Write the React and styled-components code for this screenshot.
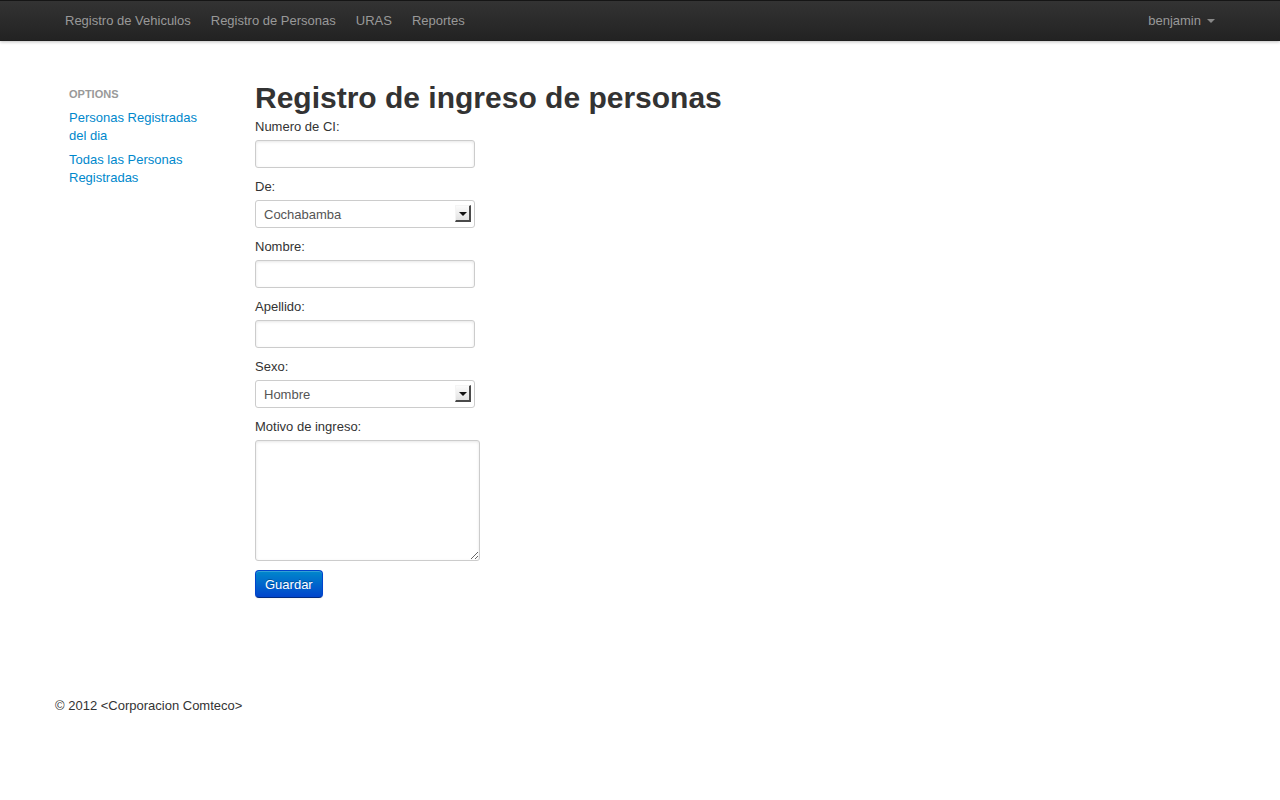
import React from 'react'
import styled, { createGlobalStyle } from 'styled-components';

const GlobalStyle = createGlobalStyle`
  body {
    margin: 0;
    background: #fff;
    font-family: "Liberation Sans", Arial, sans-serif;
    font-size: 13px;
    line-height: 18px;
    color: #333;
  }
`

export default function App() {
    const fields = [
        { label: "Numero de CI:", type: "input" },
        { label: "De:", type: "select", options: ["Cochabamba", "La Paz", "Santa Cruz", "Oruro", "Potosi", "Tarija", "Chuquisaca", "Beni", "Pando"] },
        { label: "Nombre:", type: "input" },
        { label: "Apellido:", type: "input" },
        { label: "Sexo:", type: "select", options: ["Hombre", "Mujer"] },
    ];

    return (
        <>
            <GlobalStyle />
            <Navbar>
                <Container>
                    <NavList>
                        <NavLink href="#">Registro de Vehiculos</NavLink>
                        <NavLink href="#">Registro de Personas</NavLink>
                        <NavLink href="#">URAS</NavLink>
                        <NavLink href="#">Reportes</NavLink>
                    </NavList>
                    <NavLink href="#">benjamin <Caret /></NavLink>
                </Container>
            </Navbar>

            <Page>
                <Row>
                    <Sidebar>
                        <NavHeader>Options</NavHeader>
                        <SideLink href="#">Personas Registradas del dia</SideLink>
                        <SideLink href="#">Todas las Personas Registradas</SideLink>
                    </Sidebar>
                    <Main>
                        <Title>Registro de ingreso de personas</Title>
                        <form onSubmit={(e) => e.preventDefault()}>
                            {fields.map((field, index) => (
                                <div key={index}>
                                    <Label>{field.label}</Label>
                                    {field.type === "input" ? (
                                        <TextInput type="text" />
                                    ) : (
                                        <SelectWrap>
                                            <Select defaultValue={field.options[0]}>
                                                {field.options.map((opt) => (
                                                    <option key={opt} value={opt}>{opt}</option>
                                                ))}
                                            </Select>
                                            <SelectArrow />
                                        </SelectWrap>
                                    )}
                                </div>
                            ))}
                            <Label>Motivo de ingreso:</Label>
                            <TextArea />
                            <Button type="submit">Guardar</Button>
                        </form>
                    </Main>
                </Row>
                <Footer>© 2012 &lt;Corporacion Comteco&gt;</Footer>
            </Page>
        </>
    )
}

const Navbar = styled.div`
    height: 40px;
    border-top: 1px solid #151515;
    background: linear-gradient(to bottom, #333333, #222222);
    box-shadow: 0 1px 3px rgba(0, 0, 0, 0.25), inset 0 -1px 0 rgba(0, 0, 0, 0.1);
`

const Container = styled.div`
    width: 1170px;
    margin: 0 auto;
    display: flex;
    justify-content: space-between;
    align-items: center;
    height: 40px;
`

const NavList = styled.div`
    display: flex;
`

const NavLink = styled.a`
    display: flex;
    align-items: center;
    padding: 10px 10px 11px;
    color: #999;
    text-decoration: none;
    font-size: 13px;
    line-height: 19px;
`

const Caret = styled.span`
    display: inline-block;
    margin-left: 6px;
    margin-top: 1px;
    border-top: 4px solid #888;
    border-left: 4px solid transparent;
    border-right: 4px solid transparent;
`

const Page = styled.div`
    width: 1170px;
    margin: 0 auto;
    padding-top: 37px;
`

const Row = styled.div`
    display: grid;
    grid-template-columns: 170px 1fr;
    column-gap: 30px;
`

const Sidebar = styled.div`
    display: flex;
    flex-direction: column;
    padding: 4px 14px 0;
`

const NavHeader = styled.div`
    padding: 3px 0;
    font-size: 11px;
    font-weight: bold;
    line-height: 18px;
    color: #999;
    text-transform: uppercase;
    text-shadow: 0 1px 0 rgba(255, 255, 255, 0.5);
`

const SideLink = styled.a`
    display: block;
    padding: 3px 0;
    margin-right: -2px;
    color: #0088cc;
    text-decoration: none;
    line-height: 18px;
`

const Main = styled.div`
    display: flex;
    flex-direction: column;
`

const Title = styled.h1`
    margin: 2px 0 1px;
    font-size: 30px;
    line-height: 36px;
    font-weight: bold;
    color: #333;
`

const Label = styled.label`
    display: block;
    padding-top: 1px;
    margin-bottom: 4px;
    color: #333;
    line-height: 18px;
`

const fieldBase = `
    box-sizing: border-box;
    display: block;
    width: 220px;
    height: 28px;
    margin: 0 0 9px;
    padding: 4px 8px;
    font-family: "Liberation Sans", Arial, sans-serif;
    font-size: 13px;
    line-height: 18px;
    color: #555;
    background: #fff;
    border: 1px solid #ccc;
    border-radius: 3px;
`

const TextInput = styled.input`
    ${fieldBase}
    box-shadow: inset 0 1px 3px rgba(0, 0, 0, 0.1);
    outline: none;
`

const SelectWrap = styled.div`
    position: relative;
    width: 220px;
`

const Select = styled.select`
    ${fieldBase}
    padding-top: 5px;
    appearance: none;
    -webkit-appearance: none;
    outline: none;
`

const SelectArrow = styled.span`
    position: absolute;
    top: 5px;
    right: 4px;
    width: 16px;
    height: 17px;
    box-sizing: border-box;
    background: linear-gradient(to bottom, #fbfbfb, #e2e2e2);
    border-left: 1px solid #f4f4f4;
    border-top: 1px solid #f4f4f4;
    border-right: 2px solid #4a4a4a;
    border-bottom: 2px solid #4a4a4a;
    pointer-events: none;

    &::after {
        content: "";
        position: absolute;
        left: 3px;
        top: 6px;
        border-top: 4px solid #111;
        border-left: 4px solid transparent;
        border-right: 4px solid transparent;
    }
`

const TextArea = styled.textarea`
    box-sizing: border-box;
    display: block;
    width: 225px;
    height: 121px;
    margin: 0 0 9px;
    padding: 4px;
    font-family: "Liberation Sans", Arial, sans-serif;
    font-size: 13px;
    color: #555;
    border: 1px solid #ccc;
    border-radius: 3px;
    box-shadow: inset 0 1px 3px rgba(0, 0, 0, 0.1);
    outline: none;
`

const Button = styled.button`
    display: block;
    box-sizing: border-box;
    height: 28px;
    padding: 4px 9px 3px;
    font-family: "Liberation Sans", Arial, sans-serif;
    font-size: 13px;
    line-height: 18px;
    color: #fff;
    text-shadow: 0 -1px 0 rgba(0, 0, 0, 0.25);
    background: linear-gradient(to bottom, #0088cc, #0044cc);
    border: 1px solid #0044cc;
    border-bottom-color: #002a80;
    border-radius: 4px;
    box-shadow: inset 0 1px 0 rgba(255, 255, 255, 0.2), 0 1px 2px rgba(0, 0, 0, 0.05);
    cursor: pointer;
`

const Footer = styled.footer`
    margin-top: 99px;
    line-height: 18px;
    color: #333;
`
